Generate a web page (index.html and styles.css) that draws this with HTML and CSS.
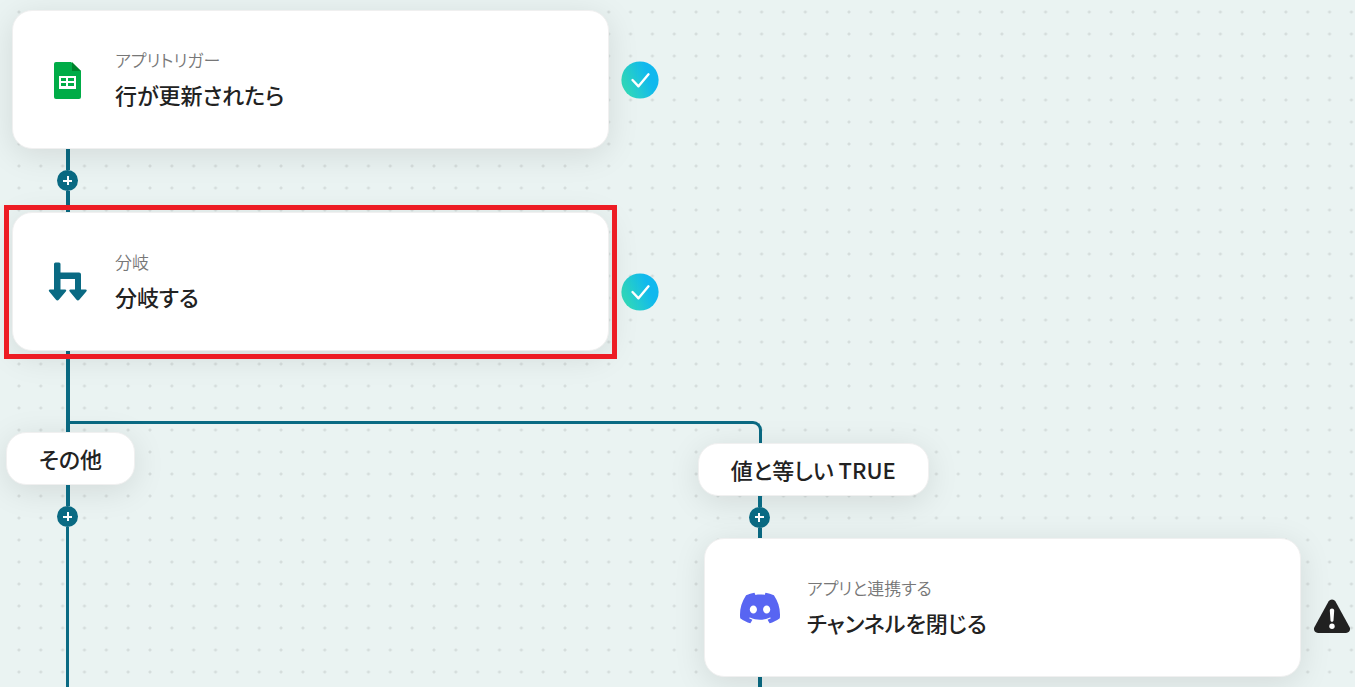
FILE: index.html
```html
<!DOCTYPE html>
<html lang="ja">
<head>
    <meta charset="UTF-8">
    <meta name="viewport" content="width=device-width, initial-scale=1.0">
    <title>フロー</title>
    <link rel="stylesheet" href="styles.css">
</head>
<body>
    <main class="canvas">
        <!-- Trigger -->
        <div class="step trunk-step">
            <div class="card">
                <svg class="card-icon" viewBox="0 0 40 40" aria-hidden="true">
                    <path fill="#00ac47" d="M8 2h15l10 9v26a2 2 0 0 1-2 2H8a2 2 0 0 1-2-2V4a2 2 0 0 1 2-2z"/>
                    <path fill="#00832d" d="M24 2l9 9h-9z"/>
                    <path fill="#fff" fill-rule="evenodd" d="M11 16h17v13H11zM13 18v3h5v-3zM20 18v3h6v-3zM13 23v3h5v-3zM20 23v3h6v-3z"/>
                </svg>
                <div class="card-text">
                    <p class="card-label">アプリトリガー</p>
                    <h2 class="card-title">行が更新されたら</h2>
                </div>
            </div>
            <svg class="status" viewBox="0 0 38 38" role="img" aria-label="完了">
                <defs>
                    <linearGradient id="done" x1="0" y1="0.7" x2="1" y2="0.3">
                        <stop offset="0.1" stop-color="#2fd8bd"/>
                        <stop offset="0.75" stop-color="#10b8ee"/>
                    </linearGradient>
                </defs>
                <circle cx="19" cy="19" r="18.6" fill="url(#done)"/>
                <path d="M11.500 19l6 6.300 10-12" fill="none" stroke="#fff" stroke-width="2.400" stroke-linecap="round" stroke-linejoin="round"/>
            </svg>
        </div>

        <div class="connector trunk-connector">
            <span class="line"></span>
            <button class="add" type="button" aria-label="追加"></button>
            <span class="line"></span>
        </div>

        <!-- Branch step -->
        <div class="step trunk-step">
            <div class="card selected">
                <svg class="card-icon" viewBox="0 0 40 40" aria-hidden="true">
                    <g fill="#0a6a83">
                        <path d="M7.500.500h3.500a1.500 1.500 0 0 1 1.500 1.500v8.500H31a2 2 0 0 1 2 2V29h-6V17H12.500v12H6V2a1.500 1.500 0 0 1 1.500-1.500z"/>
                        <path d="M2 27.500h15c1.500 0 1.500 1 .8 1.900l-6.800 8c-1 1.300-2.200 1.300-3.200 0l-6.600-8C.5 28.500.8 27.500 2 27.500z"/>
                        <path d="M22.500 27.500h15c1.500 0 1.500 1 .8 1.900l-6.800 8c-1 1.300-2.200 1.300-3.200 0l-6.600-8c-.7-.9-.4-1.900.8-1.900z"/>
                    </g>
                </svg>
                <div class="card-text">
                    <p class="card-label">分岐</p>
                    <h2 class="card-title">分岐する</h2>
                </div>
            </div>
            <svg class="status status-low" viewBox="0 0 38 38" role="img" aria-label="完了">
                <circle cx="19" cy="19" r="18.6" fill="url(#done)"/>
                <path d="M11.500 19l6 6.300 10-12" fill="none" stroke="#fff" stroke-width="2.400" stroke-linecap="round" stroke-linejoin="round"/>
            </svg>
        </div>

        <div class="branches">
            <div class="elbow"></div>

            <!-- Otherwise -->
            <section class="branch">
                <div class="connector drop">
                    <span class="line"></span>
                </div>
                <div class="pill">その他</div>
                <div class="connector tail">
                    <span class="line lead"></span>
                    <button class="add" type="button" aria-label="追加"></button>
                    <span class="line thin"></span>
                </div>
            </section>

            <!-- Equals TRUE -->
            <section class="branch branch-right">
                <div class="pill">値と等しい TRUE</div>
                <div class="connector short">
                    <span class="line"></span>
                    <button class="add" type="button" aria-label="追加"></button>
                    <span class="line"></span>
                </div>
                <div class="step">
                    <div class="card">
                        <svg class="card-icon" viewBox="0 0 24 24" aria-hidden="true">
                            <path fill="#5865f2" d="M20.317 4.3698a19.7913 19.7913 0 00-4.8851-1.5152.0741.0741 0 00-.0785.0371c-.211.3753-.4447.8648-.6083 1.2495-1.8447-.2762-3.68-.2762-5.4868 0-.1636-.3933-.4058-.8742-.6177-1.2495a.077.077 0 00-.0785-.037 19.7363 19.7363 0 00-4.8852 1.515.0699.0699 0 00-.0321.0277C.5334 9.0458-.319 13.5799.0992 18.0578a.0824.0824 0 00.0312.0561c2.0528 1.5076 4.0413 2.4228 5.9929 3.0294a.0777.0777 0 00.0842-.0276c.4616-.6304.8731-1.2952 1.226-1.9942a.076.076 0 00-.0416-.1057c-.6528-.2476-1.2743-.5495-1.8722-.8923a.077.077 0 01-.0076-.1277c.1258-.0943.2517-.1923.3718-.2914a.0743.0743 0 01.0776-.0105c3.9278 1.7933 8.18 1.7933 12.0614 0a.0739.0739 0 01.0785.0095c.1202.099.246.1981.3728.2924a.077.077 0 01-.0066.1276 12.2986 12.2986 0 01-1.873.8914.0766.0766 0 00-.0407.1067c.3604.698.7719 1.3628 1.225 1.9932a.076.076 0 00.0842.0286c1.961-.6067 3.9495-1.5219 6.0023-3.0294a.077.077 0 00.0313-.0552c.5004-5.177-.8382-9.6739-3.5485-13.6604a.061.061 0 00-.0312-.0286zM8.02 15.3312c-1.1825 0-2.1569-1.0857-2.1569-2.419 0-1.3332.9555-2.4189 2.157-2.4189 1.2108 0 2.1757 1.0952 2.1568 2.419 0 1.3332-.9555 2.4189-2.1569 2.4189zm7.9748 0c-1.1825 0-2.1569-1.0857-2.1569-2.419 0-1.3332.9554-2.4189 2.1569-2.4189 1.2108 0 2.1757 1.0952 2.1568 2.419 0 1.3332-.946 2.4189-2.1568 2.4189Z"/>
                        </svg>
                        <div class="card-text">
                            <p class="card-label">アプリと連携する</p>
                            <h2 class="card-title">チャンネルを閉じる</h2>
                        </div>
                    </div>
                    <svg class="status status-low" viewBox="0 0 38 38" role="img" aria-label="警告">
                        <path fill="#222" d="M15.500 2.500c1.600-2.700 5.400-2.700 7 0l14 25.500c1.500 2.800-.2 6-3.500 6H5c-3.300 0-5-3.200-3.500-6z"/>
                        <path fill="#fff" d="M16.800 11.500c0-2.800 4.400-2.800 4.400 0l-.7 10c-.1 1.700-2.900 1.700-3 0z"/>
                        <circle cx="19" cy="27.300" r="2.700" fill="#fff"/>
                    </svg>
                </div>
                <div class="connector tail">
                    <span class="line"></span>
                </div>
            </section>
        </div>
    </main>
</body>
</html>
```
FILE: styles.css
```css
* {
    box-sizing: border-box;
}

body {
    margin: 0;
    font-family: "Noto Sans CJK JP", sans-serif;
    font-feature-settings: "palt";
    color: #222;
    background: #eaf3f2;
}

.canvas {
    display: flex;
    flex-direction: column;
    min-height: 100vh;
    padding: 10px 0 0 12px;
    overflow: hidden;
    background-image: radial-gradient(circle, #d5dddc 1px, transparent 2px);
    background-size: 22px 22px;
    background-position: 8px 1px;
    background-repeat: round repeat;
}

/* Steps */
.step {
    display: flex;
    align-items: center;
    gap: 12px;
    padding-right: 4px;
}

/* trunk steps are as wide as the left branch column */
.trunk-step {
    width: calc(100% * 17 / 33);
    padding-right: 45px;
}

.card {
    position: relative;
    flex: 1;
    display: flex;
    align-items: center;
    gap: 27px;
    min-height: 139px;
    padding: 0 35px;
    background: #fff;
    border: 1px solid #f0f0f0;
    border-radius: 20px;
    box-shadow: 0 6px 32px rgba(0, 0, 0, 0.1);
}

.card.selected::after {
    content: "";
    position: absolute;
    inset: -8px -9px -9px;
    border: 5px solid #ed1c24;
}

.card-icon {
    flex: none;
    width: 40px;
    height: 40px;
}

.card-label {
    margin: 0;
    font-size: 17px;
    font-weight: 350;
    line-height: 28px;
    color: #777;
}

.card-title {
    margin: 0;
    font-size: 22px;
    font-weight: 500;
    line-height: 40px;
}

.status {
    flex: none;
    width: 38px;
    height: 38px;
}

.status-low {
    margin-top: 20px;
}

/* Connectors */
.connector {
    display: flex;
    flex-direction: column;
    width: 21px;
    margin-left: 45px;
}

.trunk-connector {
    height: 63px;
}

.drop {
    height: 81px;
}

.short {
    height: 42px;
}

.tail {
    flex: 1;
}

.line {
    flex: 1;
    width: 4px;
    margin-left: 9px;
    background: #0a6a83;
}

.line.thin {
    width: 3px;
}

.line.lead {
    flex: none;
    height: 21px;
}

.add {
    flex: none;
    width: 21px;
    height: 21px;
    padding: 0;
    border: none;
    border-radius: 50%;
    background:
        linear-gradient(#fff, #fff) center / 9px 2px no-repeat,
        linear-gradient(#fff, #fff) center / 2px 9px no-repeat,
        #0a6a83;
    cursor: pointer;
}

/* Branches */
.branches {
    flex: 1;
    display: grid;
    grid-template-columns: 17fr 16fr;
}

.elbow {
    grid-area: 1 / 1;
    height: 23px;
    margin: 70px -58px 0 58px;
    border-top: 3px solid #0a6a83;
    border-right: 3px solid #0a6a83;
    border-top-right-radius: 9px;
}

.branch {
    grid-area: 1 / 1;
    display: flex;
    flex-direction: column;
    min-width: 0;
}

.branch-right {
    grid-area: 1 / 2;
    padding-top: 92px;
}

.pill {
    align-self: flex-start;
    margin-left: -6px;
    padding: 0 32px;
    font-size: 22px;
    font-weight: 500;
    line-height: 51px;
    white-space: nowrap;
    background: #fff;
    border: 1px solid #f0f0f0;
    border-radius: 20px;
    box-shadow: 0 6px 32px rgba(0, 0, 0, 0.1);
}
```
